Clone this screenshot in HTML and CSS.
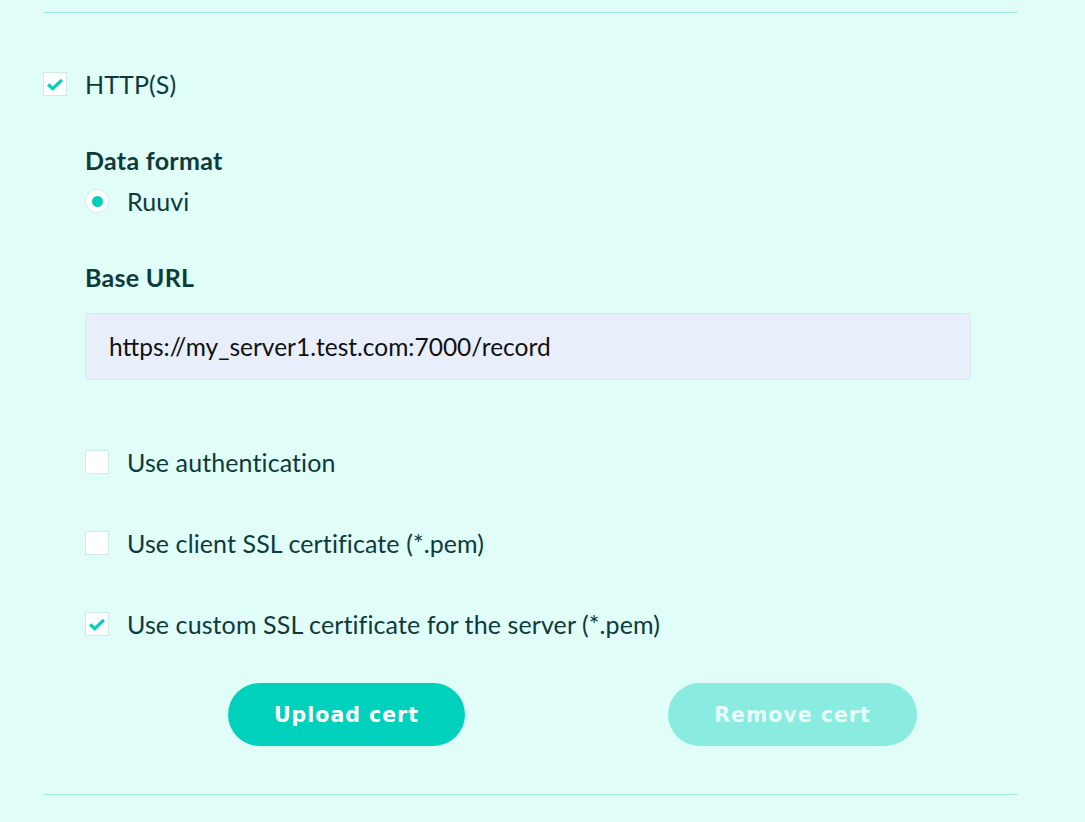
FILE: index.html
```html
<!DOCTYPE html>
<html>
<head>
<meta charset="utf-8">
<link rel="stylesheet" href="styles.css">
</head>
<body>
<div class="panel">
  <div class="divider"></div>
  <div class="check-row top-row">
    <span class="box"><svg viewBox="0 0 24 24" width="24" height="24"><path d="M4.5 12.5 L9.5 17 L19.5 7.5" fill="none" stroke="#00d1bc" stroke-width="3.5"/></svg></span>
    <span class="label">HTTP(S)</span>
  </div>
  <div class="sub">
    <div class="field-title fmt">Data format</div>
    <div class="radio-row">
      <span class="radio"><span class="dot"></span></span>
      <span class="label">Ruuvi</span>
    </div>
    <div class="field-title url">Base URL</div>
    <div class="input">https://my_server1.test.com:7000/record</div>
    <div class="check-row opt first">
      <span class="box"></span>
      <span class="label">Use authentication</span>
    </div>
    <div class="check-row opt">
      <span class="box"></span>
      <span class="label">Use client SSL certificate (*.pem)</span>
    </div>
    <div class="check-row opt">
      <span class="box"><svg viewBox="0 0 24 24" width="24" height="24"><path d="M4.5 12.5 L9.5 17 L19.5 7.5" fill="none" stroke="#00d1bc" stroke-width="3.5"/></svg></span>
      <span class="label">Use custom SSL certificate for the server (*.pem)</span>
    </div>
  </div>
  <div class="buttons">
    <button class="btn primary">Upload cert</button>
    <button class="btn disabled">Remove cert</button>
  </div>
  <div class="divider bottom"></div>
</div>
</body>
</html>
```
FILE: styles.css
```css
html, body {
  margin: 0;
  padding: 0;
  background: #e0fdf7;
  height: 100%;
}
body {
  font-family: Lato, "Noto Sans", sans-serif;
  color: #0e3a3c;
}
.panel {
  margin-left: 43px;
  width: 975px;
  padding-top: 12px;
}
.divider {
  height: 1px;
  background: #a3ebde;
}
.check-row, .radio-row {
  display: flex;
  align-items: center;
  height: 32px;
}
.label {
  font-size: 25px;
  line-height: 32px;
  letter-spacing: 0.1px;
}
.top-row {
  margin-top: 55px;
  gap: 18px;
}
.box {
  width: 22px;
  height: 22px;
  border: 1px solid #cfece6;
  background: #fff;
  display: flex;
  align-items: center;
  justify-content: center;
  flex: none;
}
.box svg {
  width: 22px;
  height: 22px;
}
.sub {
  margin-left: 42px;
}
.field-title {
  font-size: 25px;
  font-weight: 700;
  line-height: 30px;
  letter-spacing: 0.3px;
}
.fmt { margin-top: 45px; }
.url { margin-top: 45px; }
.radio-row {
  margin-top: 10px;
  margin-left: 1px;
  gap: 19px;
}
.radio {
  width: 22px;
  height: 22px;
  border-radius: 50%;
  background: #fff;
  box-shadow: 0 0 0 1px #d6efea;
  display: flex;
  align-items: center;
  justify-content: center;
}
.dot {
  width: 11px;
  height: 11px;
  border-radius: 50%;
  background: #00cfb9;
}
.input {
  margin-top: 21px;
  width: 861px;
  height: 65px;
  padding-left: 23px;
  border: 1px solid #d8e8ef;
  border-radius: 4px;
  background: #e8effb;
  display: flex;
  align-items: center;
  font-size: 24.5px;
  color: #111;
}
.opt {
  gap: 18px;
  margin-top: 49px;
}
.opt.first { margin-top: 66px; }
.buttons {
  display: flex;
  gap: 203px;
  margin-top: 43px;
  padding-left: 185px;
}
.btn {
  height: 63px;
  border: none;
  border-radius: 32px;
  color: #fff;
  font-family: "DejaVu Sans", sans-serif;
  font-weight: 700;
  font-size: 20.5px;
  letter-spacing: 1px;
  padding: 0;
}
.primary {
  width: 237px;
  background: #00d1bc;
}
.disabled {
  width: 249px;
  background: #8aece0;
  color: #e9fdf9;
}
.bottom {
  margin-top: 48px;
}
```
